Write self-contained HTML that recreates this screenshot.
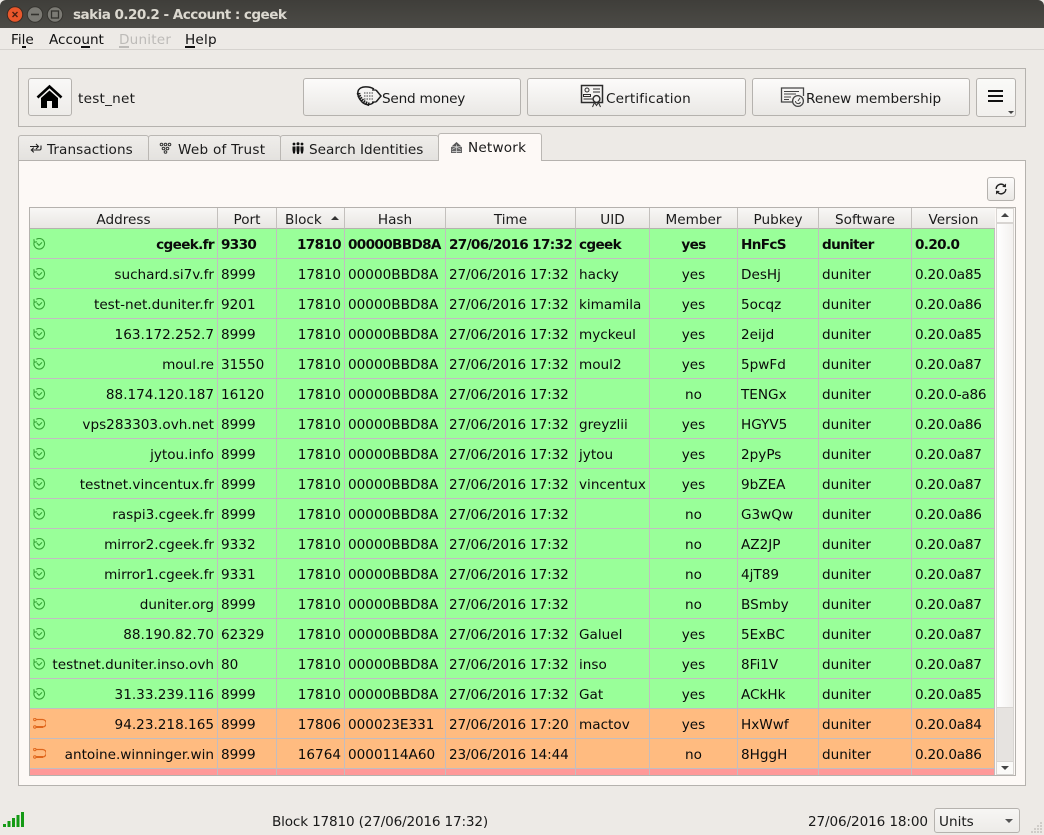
<!DOCTYPE html>
<html><head><meta charset="utf-8"><title>sakia</title>
<style>
html,body{margin:0;padding:0}
body{width:1044px;height:835px;overflow:hidden;position:relative;background:#edeae6;font:13.6px/18px "DejaVu Sans",sans-serif;color:#1a1a1a}
.a{position:absolute}
.t{position:absolute;white-space:nowrap}
.btn{position:absolute;box-sizing:border-box;border:1px solid #b5b2ae;border-radius:3px;background:linear-gradient(#fcfbfa,#eae8e5)}
.u{position:absolute;height:2px;background:#111}
.tab{position:absolute;box-sizing:border-box;top:135px;height:25px;border:1px solid #bab7b3;border-bottom:none;border-radius:3px 3px 0 0;background:linear-gradient(#efedea,#e4e2df)}
table{border-collapse:separate;border-spacing:0;table-layout:fixed;width:965px;position:absolute;left:0;top:21px;color:#0a0a0a}
td{height:30px;box-sizing:border-box;padding:4px 3px 0;border-right:1px solid #c2bdc1;border-bottom:1px solid #c2bdc1;white-space:nowrap;overflow:hidden;line-height:25px}
td:nth-child(1),td:nth-child(3){text-align:right}
td:nth-child(7){text-align:center}
td:nth-child(5){letter-spacing:-.14px}
td:nth-child(10){letter-spacing:-.25px}
tr.g td{background:#99ff99}
tr.o td{background:#ffbb80}
tr.p td{background:#ff9999}
tr.b td{font-weight:bold;letter-spacing:-.65px}
.h{position:absolute;top:0;height:21px;box-sizing:border-box;border-right:1px solid #c3c0bd;border-bottom:1px solid #b5b2ae;background:linear-gradient(#f8f7f5,#e8e6e3);text-align:center;line-height:24px;color:#1a1a1a}
td svg{position:absolute;left:3px;margin-top:5px}
</style></head>
<body>
<!-- window title -->
<div class="a" style="left:0;top:0;width:1044px;height:28px;background:linear-gradient(#3f3e3a,#4c4b46);border-radius:6px 6px 0 0"></div>
<svg class="a" style="left:0;top:0" width="70" height="28">
<circle cx="15" cy="14.5" r="7.7" fill="#e9572b" stroke="#3a2a22"/>
<path d="M12.500 12l5 5M17.500 12l-5 5" stroke="#4a1f10" stroke-width="1.4"/>
<circle cx="35" cy="14.5" r="7.7" fill="#7b7a74" stroke="#35342f"/>
<path d="M31 14.500h8" stroke="#33322e" stroke-width="1.6"/>
<circle cx="55" cy="14.5" r="7.7" fill="#7b7a74" stroke="#35342f"/>
<rect x="51.5" y="11" width="7" height="7" fill="none" stroke="#33322e" stroke-width="1.3"/>
</svg>
<div class="t" style="left:73px;top:6px;font-weight:bold;color:#dcd9d0;letter-spacing:-.56px">sakia 0.20.2 - Account : cgeek</div>

<!-- menu -->
<div class="a" style="left:0;top:28px;width:1044px;height:21px;background:#edeae6;border-bottom:1px solid #d6d3cf"></div>
<div class="t" style="left:11px;top:31px;color:#111">File</div>
<div class="t" style="left:49px;top:31px;color:#111">Account</div>
<div class="t" style="left:119px;top:31px;color:#bdbbb8;letter-spacing:.2px">Duniter</div>
<div class="t" style="left:185px;top:31px;color:#111;letter-spacing:.2px">Help</div>
<div class="u" style="left:22px;top:46px;width:4px"></div>
<div class="u" style="left:81px;top:46px;width:9px"></div>
<div class="u" style="left:119px;top:46px;width:10px;background:#bdbbb8"></div>
<div class="u" style="left:185px;top:46px;width:10px"></div>

<!-- toolbar frame -->
<div class="a" style="left:18px;top:68px;width:1008px;height:59px;box-sizing:border-box;border:1px solid #b5b2ae;background:#edeae6"></div>
<div class="btn" style="left:28px;top:78px;width:44px;height:38px;background:linear-gradient(#f9f8f7,#eeece9)"></div>
<svg class="a" style="left:36px;top:84px" width="28" height="25"><path d="M1.500 13.500L13.500 2.500L25.500 13.500" fill="none" stroke="#000" stroke-width="2.6"/><path d="M5 14L13.500 6.500L22 14V24H16V17H11V24H5Z" fill="#000"/></svg>
<div class="t" style="left:78px;top:90px;letter-spacing:.25px">test_net</div>

<div class="btn" style="left:303px;top:78px;width:218px;height:38px"></div>
<svg class="a" style="left:356px;top:85px" width="27" height="23" fill="none" stroke="#1c1c1c">
<path d="M18 4C13 1 5 1 2.500 5C0.500 9 3 14 6 17C9 20 14 21 18 17" stroke-width="1.5"/>
<path d="M2.500 8C3 13 8 18.500 14 19.500" stroke-width="3.6" stroke-dasharray="1.6 .9"/>
<path d="M8 8h9M8 11h9M8 14h9" stroke-width="1.2" stroke="#666" stroke-dasharray="1.5 1"/>
<path d="M20 5l5 6l-5 6" stroke-width="1.5"/><path d="M16 5h4M16 17h4" stroke-width="1.200"/>
</svg>
<div class="t" style="left:382px;top:90px;letter-spacing:-.2px">Send money</div>

<div class="btn" style="left:527px;top:78px;width:219px;height:38px"></div>
<svg class="a" style="left:580px;top:84px" width="25" height="25" fill="none" stroke="#2c2c2c">
<rect x="1.500" y="1.500" width="21" height="17" stroke-width="1.5"/>
<circle cx="7" cy="6" r="2" stroke-width="1"/><path d="M3.500 12.500v-2h7v2zM3.500 15h9M13 5h7M13 8h7" stroke-width="1"/>
<circle cx="16.500" cy="15" r="3.4" fill="#f3f2f0" stroke-width="1.4"/><path d="M12.500 23l2-4.500l2 3l2-3l2 4.500" stroke-width="1"/>
</svg>
<div class="t" style="left:606px;top:90px;letter-spacing:.15px">Certification</div>

<div class="btn" style="left:752px;top:78px;width:218px;height:38px"></div>
<svg class="a" style="left:780px;top:86px" width="26" height="22" fill="none" stroke="#444">
<path d="M14 16H1.500V2H23.500V10" stroke-width="1.3"/><path d="M4 5.500h15M4 8h12M4 11h7M4 13.500h5" stroke-width="1"/>
<circle cx="18" cy="15" r="5.400" fill="#f3f2f0" stroke-width="1.3"/><path d="M18 15l2-3M15.500 15a2.600 2.600 0 0 0 5 1" stroke-width="1"/>
</svg>
<div class="t" style="left:806px;top:90px">Renew membership</div>

<div class="btn" style="left:976px;top:78px;width:40px;height:39px;background:linear-gradient(#fafaf8,#f2f0ed)"></div>
<div class="a" style="left:988px;top:90px;width:15px;height:2px;background:#111"></div>
<div class="a" style="left:988px;top:95px;width:15px;height:2px;background:#111"></div>
<div class="a" style="left:988px;top:100px;width:15px;height:2px;background:#111"></div>
<div class="a" style="left:1008px;top:111px;width:0;height:0;border:3px solid transparent;border-top:3px solid #444;border-bottom:0"></div>

<!-- panel -->
<div class="a" style="left:18px;top:160px;width:1008px;height:626px;box-sizing:border-box;border:1px solid #b5b2ae;background:#fdf9f6"></div>

<!-- tabs -->
<div class="tab" style="left:18px;width:131px"></div>
<svg class="a" style="left:29px;top:142px" width="13" height="12" fill="none" stroke="#222" stroke-width="1.1"><path d="M12 3.500V6.500a1.500 1.500 0 0 1-1.500 1.500H2.500M4.800 5.600L2.300 8L4.800 10.400"/><path d="M1 4.500H9M7 2L9.500 4.500L7 7"/></svg>
<div class="t" style="left:47px;top:141px;letter-spacing:.08px">Transactions</div>
<div class="tab" style="left:148px;width:133px"></div>
<svg class="a" style="left:159px;top:142px" width="13" height="12" fill="none" stroke="#333" stroke-width="1"><circle cx="2.500" cy="2.500" r="1.300"/><circle cx="6.500" cy="2.500" r="1.300"/><circle cx="10.500" cy="2.500" r="1.300"/><circle cx="4.500" cy="6.500" r="1.300"/><circle cx="8.500" cy="6.500" r="1.300"/><circle cx="6.500" cy="10" r="1.300"/></svg>
<div class="t" style="left:178px;top:141px;letter-spacing:.25px">Web of Trust</div>
<div class="tab" style="left:280px;width:159px"></div>
<svg class="a" style="left:292px;top:142px" width="12" height="12" fill="#111"><circle cx="2" cy="2" r="1.400"/><circle cx="6" cy="1.800" r="1.500"/><circle cx="10" cy="2" r="1.400"/><path d="M.5 4.500h3v3.500l-.6 3.500h-1.800l-.6-3.500zM4.500 4.200h3v4l-.6 3.800h-1.800l-.6-3.800zM8.500 4.500h3v3.500l-.6 3.500h-1.800l-.6-3.500z"/></svg>
<div class="t" style="left:309px;top:141px">Search Identities</div>
<div class="a" style="left:438px;top:133px;width:104px;height:28px;box-sizing:border-box;border:1px solid #bab7b3;border-bottom:none;border-radius:3px 3px 0 0;background:#fdf9f6"></div>
<svg class="a" style="left:450px;top:141px" width="13" height="13"><path d="M6.500 1L11.500 5.500H1.500Z" fill="#555"/><rect x="1" y="6" width="11" height="6" fill="#666"/><path d="M6.500 3.500V12M2 8.500L6.500 6L11 8.500M2 10.500H11" stroke="#ddd" stroke-width=".7" fill="none"/></svg>
<div class="t" style="left:468px;top:139px;letter-spacing:.2px">Network</div>

<!-- refresh -->
<div class="btn" style="left:987px;top:177px;width:28px;height:24px"></div>
<svg class="a" style="left:995px;top:183px" width="12" height="12" fill="none" stroke="#222" stroke-width="1.4"><path d="M1.200 6a4.800 4.800 0 0 1 8.200-3.400"/><path d="M10.800 6a4.800 4.800 0 0 1-8.200 3.400"/><path d="M10.800 .8L10.600 3.900L7.500 3.700" fill="#222" stroke-width=".6"/><path d="M1.200 11.200L1.400 8.100L4.500 8.300" fill="#222" stroke-width=".6"/></svg>

<!-- table -->
<div class="a" style="left:29px;top:207px;width:987px;height:569px;box-sizing:border-box;border:1px solid #b5b2ae;overflow:hidden;background:#fdf9f6">
  <div class="h" style="left:0;width:188px">Address</div>
  <div class="h" style="left:188px;width:59px">Port</div>
  <div class="h" style="left:247px;width:68px;text-align:left;padding-left:8px">Block</div>
  <div class="a" style="left:301px;top:8px;width:0;height:0;border:4px solid transparent;border-bottom:4px solid #333;border-top:0;z-index:2"></div>
  <div class="h" style="left:315px;width:101px">Hash</div>
  <div class="h" style="left:416px;width:130px">Time</div>
  <div class="h" style="left:546px;width:74px">UID</div>
  <div class="h" style="left:620px;width:88px">Member</div>
  <div class="h" style="left:708px;width:81px">Pubkey</div>
  <div class="h" style="left:789px;width:93px">Software</div>
  <div class="h" style="left:882px;width:83px;border-right:none">Version</div>

  <svg width="0" height="0" style="position:absolute"><defs>
  <g id="ok" fill="none" stroke="#38a538" stroke-width="1.1"><path d="M3.300 1.300A5.300 5.300 0 1 1 1.200 4"/><path d="M.9 1.200L1.200 4.200L4 3.800"/><path d="M3.800 5L6 7.300L9 4.400"/></g>
  <g id="sy" fill="none" stroke="#e0661c"><path d="M3 1.500H9.500a3.700 3.700 0 0 1 0 7.500H3" stroke-width="1.300"/><path d="M3 9H10" stroke-width="2"/><circle cx="1.800" cy="1.500" r="1.200" stroke-width="1"/><circle cx="1.800" cy="9" r="1.200" stroke-width="1"/></g>
  </defs></svg>

  <table>
  <colgroup><col style="width:188px"><col style="width:59px"><col style="width:68px"><col style="width:101px"><col style="width:130px"><col style="width:74px"><col style="width:88px"><col style="width:81px"><col style="width:93px"><col style="width:83px"></colgroup>
  <tr class="g b"><td><svg width="13" height="13"><use href="#ok"/></svg>cgeek.fr</td><td>9330</td><td>17810</td><td>00000BBD8A</td><td>27/06/2016 17:32</td><td>cgeek</td><td>yes</td><td>HnFcS</td><td>duniter</td><td>0.20.0</td></tr>
  <tr class="g"><td><svg width="13" height="13"><use href="#ok"/></svg>suchard.si7v.fr</td><td>8999</td><td>17810</td><td>00000BBD8A</td><td>27/06/2016 17:32</td><td>hacky</td><td>yes</td><td>DesHj</td><td>duniter</td><td>0.20.0a85</td></tr>
  <tr class="g"><td><svg width="13" height="13"><use href="#ok"/></svg>test-net.duniter.fr</td><td>9201</td><td>17810</td><td>00000BBD8A</td><td>27/06/2016 17:32</td><td>kimamila</td><td>yes</td><td>5ocqz</td><td>duniter</td><td>0.20.0a86</td></tr>
  <tr class="g"><td><svg width="13" height="13"><use href="#ok"/></svg>163.172.252.7</td><td>8999</td><td>17810</td><td>00000BBD8A</td><td>27/06/2016 17:32</td><td>myckeul</td><td>yes</td><td>2eijd</td><td>duniter</td><td>0.20.0a85</td></tr>
  <tr class="g"><td><svg width="13" height="13"><use href="#ok"/></svg>moul.re</td><td>31550</td><td>17810</td><td>00000BBD8A</td><td>27/06/2016 17:32</td><td>moul2</td><td>yes</td><td>5pwFd</td><td>duniter</td><td>0.20.0a87</td></tr>
  <tr class="g"><td><svg width="13" height="13"><use href="#ok"/></svg>88.174.120.187</td><td>16120</td><td>17810</td><td>00000BBD8A</td><td>27/06/2016 17:32</td><td></td><td>no</td><td>TENGx</td><td>duniter</td><td>0.20.0-a86</td></tr>
  <tr class="g"><td><svg width="13" height="13"><use href="#ok"/></svg>vps283303.ovh.net</td><td>8999</td><td>17810</td><td>00000BBD8A</td><td>27/06/2016 17:32</td><td>greyzlii</td><td>yes</td><td>HGYV5</td><td>duniter</td><td>0.20.0a86</td></tr>
  <tr class="g"><td><svg width="13" height="13"><use href="#ok"/></svg>jytou.info</td><td>8999</td><td>17810</td><td>00000BBD8A</td><td>27/06/2016 17:32</td><td>jytou</td><td>yes</td><td>2pyPs</td><td>duniter</td><td>0.20.0a87</td></tr>
  <tr class="g"><td><svg width="13" height="13"><use href="#ok"/></svg>testnet.vincentux.fr</td><td>8999</td><td>17810</td><td>00000BBD8A</td><td>27/06/2016 17:32</td><td>vincentux</td><td>yes</td><td>9bZEA</td><td>duniter</td><td>0.20.0a87</td></tr>
  <tr class="g"><td><svg width="13" height="13"><use href="#ok"/></svg>raspi3.cgeek.fr</td><td>8999</td><td>17810</td><td>00000BBD8A</td><td>27/06/2016 17:32</td><td></td><td>no</td><td>G3wQw</td><td>duniter</td><td>0.20.0a86</td></tr>
  <tr class="g"><td><svg width="13" height="13"><use href="#ok"/></svg>mirror2.cgeek.fr</td><td>9332</td><td>17810</td><td>00000BBD8A</td><td>27/06/2016 17:32</td><td></td><td>no</td><td>AZ2JP</td><td>duniter</td><td>0.20.0a87</td></tr>
  <tr class="g"><td><svg width="13" height="13"><use href="#ok"/></svg>mirror1.cgeek.fr</td><td>9331</td><td>17810</td><td>00000BBD8A</td><td>27/06/2016 17:32</td><td></td><td>no</td><td>4jT89</td><td>duniter</td><td>0.20.0a87</td></tr>
  <tr class="g"><td><svg width="13" height="13"><use href="#ok"/></svg>duniter.org</td><td>8999</td><td>17810</td><td>00000BBD8A</td><td>27/06/2016 17:32</td><td></td><td>no</td><td>BSmby</td><td>duniter</td><td>0.20.0a87</td></tr>
  <tr class="g"><td><svg width="13" height="13"><use href="#ok"/></svg>88.190.82.70</td><td>62329</td><td>17810</td><td>00000BBD8A</td><td>27/06/2016 17:32</td><td>Galuel</td><td>yes</td><td>5ExBC</td><td>duniter</td><td>0.20.0a87</td></tr>
  <tr class="g"><td><svg width="13" height="13"><use href="#ok"/></svg>testnet.duniter.inso.ovh</td><td>80</td><td>17810</td><td>00000BBD8A</td><td>27/06/2016 17:32</td><td>inso</td><td>yes</td><td>8Fi1V</td><td>duniter</td><td>0.20.0a87</td></tr>
  <tr class="g"><td><svg width="13" height="13"><use href="#ok"/></svg>31.33.239.116</td><td>8999</td><td>17810</td><td>00000BBD8A</td><td>27/06/2016 17:32</td><td>Gat</td><td>yes</td><td>ACkHk</td><td>duniter</td><td>0.20.0a85</td></tr>
  <tr class="o"><td><svg width="13" height="13"><use href="#sy"/></svg>94.23.218.165</td><td>8999</td><td>17806</td><td>000023E331</td><td>27/06/2016 17:20</td><td>mactov</td><td>yes</td><td>HxWwf</td><td>duniter</td><td>0.20.0a84</td></tr>
  <tr class="o"><td><svg width="13" height="13"><use href="#sy"/></svg>antoine.winninger.win</td><td>8999</td><td>16764</td><td>0000114A60</td><td>23/06/2016 14:44</td><td></td><td>no</td><td>8HggH</td><td>duniter</td><td>0.20.0a86</td></tr>
  <tr class="p"><td></td><td></td><td></td><td></td><td></td><td></td><td></td><td></td><td></td><td></td></tr>
  </table>

  <!-- scrollbar -->
  <div class="a" style="left:965px;top:0;width:20px;height:567px;background:#fdf9f6"></div>
  <div class="a" style="left:966px;top:15px;width:18px;height:485px;box-sizing:border-box;border:1px solid #d8d5d2;background:linear-gradient(90deg,#fff,#f3f1ef)"></div>
  <div class="a" style="left:966px;top:500px;width:18px;height:54px;background:#e6e3e0;border-left:1px solid #d8d5d2;border-right:1px solid #d8d5d2;box-sizing:border-box"></div>
  <div class="a" style="left:966px;top:0;width:18px;height:15px;box-sizing:border-box;border:1px solid #d8d5d2;background:#fbfaf8"></div>
  <div class="a" style="left:966px;top:553px;width:18px;height:14px;box-sizing:border-box;border:1px solid #d8d5d2;background:#fbfaf8"></div>
  <div class="a" style="left:971px;top:5px;width:0;height:0;border:4px solid transparent;border-bottom:4px solid #444;border-top:0"></div>
  <div class="a" style="left:971px;top:558px;width:0;height:0;border:4px solid transparent;border-top:4px solid #444;border-bottom:0"></div>
</div>

<!-- status bar -->
<svg class="a" style="left:3px;top:812px" width="22" height="16" fill="#159a15"><rect x="0" y="12" width="3" height="3"/><rect x="4.500" y="9" width="3" height="6"/><rect x="9" y="6" width="3" height="9"/><rect x="13.500" y="3" width="3" height="12"/><rect x="18" y="0" width="3" height="15"/></svg>
<div class="t" style="left:272px;top:813px;letter-spacing:-.17px">Block 17810 (27/06/2016 17:32)</div>
<div class="t" style="left:808px;top:813px;letter-spacing:-.12px">27/06/2016 18:00</div>
<div class="btn" style="left:934px;top:808px;width:86px;height:25px;background:linear-gradient(#f7f6f4,#edebe8)"></div>
<div class="t" style="left:939px;top:813px">Units</div>
<div class="a" style="left:1005px;top:819px;width:0;height:0;border:4px solid transparent;border-top:4px solid #555;border-bottom:0"></div>
<svg class="a" style="left:1030px;top:820px" width="14" height="15" fill="#cfccc8"><rect x="10" y="2" width="2" height="2"/><rect x="7" y="5" width="2" height="2"/><rect x="10" y="5" width="2" height="2"/><rect x="4" y="8" width="2" height="2"/><rect x="7" y="8" width="2" height="2"/><rect x="10" y="8" width="2" height="2"/><rect x="1" y="11" width="2" height="2"/><rect x="4" y="11" width="2" height="2"/><rect x="7" y="11" width="2" height="2"/><rect x="10" y="11" width="2" height="2"/></svg>
</body></html>
